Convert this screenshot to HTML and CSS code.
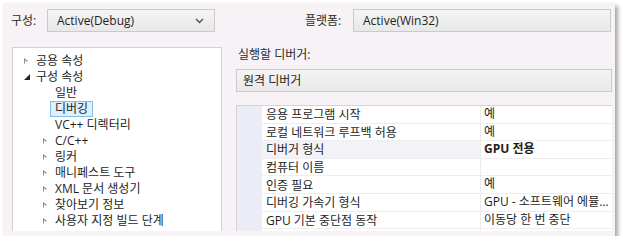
FILE: index.html
```html
<!DOCTYPE html>
<html lang="ko">
<head>
    <meta charset="UTF-8">
    <title>디버깅 속성</title>
    <link rel="stylesheet" href="styles.css">
</head>
<body>
    <div class="frame">
        <div class="toolbar">
            <span class="label">구성:</span>
            <div class="combo">
                <span>Active(Debug)</span>
                <svg class="chev" width="9" height="6" viewBox="0 0 9 6"><path d="M1 1 L4.5 4.5 L8 1" fill="none" stroke="#4a4a4a" stroke-width="1.3"/></svg>
            </div>
            <span></span>
            <span class="label">플랫폼:</span>
            <div class="combo">
                <span>Active(Win32)</span>
            </div>
        </div>

        <div class="main">
            <!-- 왼쪽 트리 -->
            <ul class="tree">
                <li class="node lv1"><i class="arrow closed"></i><span class="txt">공용 속성</span></li>
                <li class="node lv1"><i class="arrow open"></i><span class="txt">구성 속성</span></li>
                <li class="node lv2"><i class="arrow"></i><span class="txt">일반</span></li>
                <li class="node lv2"><i class="arrow"></i><span class="txt selected">디버깅</span></li>
                <li class="node lv2"><i class="arrow"></i><span class="txt">VC++ 디렉터리</span></li>
                <li class="node lv2"><i class="arrow closed"></i><span class="txt">C/C++</span></li>
                <li class="node lv2"><i class="arrow closed"></i><span class="txt">링커</span></li>
                <li class="node lv2"><i class="arrow closed"></i><span class="txt">매니페스트 도구</span></li>
                <li class="node lv2"><i class="arrow closed"></i><span class="txt">XML 문서 생성기</span></li>
                <li class="node lv2"><i class="arrow closed"></i><span class="txt">찾아보기 정보</span></li>
                <li class="node lv2"><i class="arrow closed"></i><span class="txt">사용자 지정 빌드 단계</span></li>
            </ul>

            <!-- 오른쪽 디버거 설정 -->
            <div class="side">
                <div class="side-label">실행할 디버거:</div>
                <div class="combo wide"><span>원격 디버거</span></div>
                <div class="props">
                    <div class="prop"><span class="gutter"></span><span class="name">응용 프로그램 시작</span><span class="value">예</span></div>
                    <div class="prop"><span class="gutter"></span><span class="name">로컬 네트워크 루프백 허용</span><span class="value">예</span></div>
                    <div class="prop current"><span class="gutter"></span><span class="name">디버거 형식</span><span class="value strong">GPU 전용</span></div>
                    <div class="prop"><span class="gutter"></span><span class="name">컴퓨터 이름</span><span class="value"></span></div>
                    <div class="prop"><span class="gutter"></span><span class="name">인증 필요</span><span class="value">예</span></div>
                    <div class="prop"><span class="gutter"></span><span class="name">디버깅 가속기 형식</span><span class="value">GPU - 소프트웨어 에뮬레이터</span></div>
                    <div class="prop"><span class="gutter"></span><span class="name">GPU 기본 중단점 동작</span><span class="value">이동당 한 번 중단</span></div>
                    <div class="prop"><span class="gutter"></span><span class="name"></span><span class="value"></span></div>
                </div>
            </div>
        </div>
    </div>
</body>
</html>
```

FILE: styles.css
```css
:root {
    --panel: #f6f2f6;
    --text: #1e1e1e;
    --line: #cdc8cd;
    --gutter: #ececf6;
}

* {
    box-sizing: border-box;
    margin: 0;
    padding: 0;
}

body {
    background: #ffffff;
    padding: 3px 0 0 3px;
    font-family: 'Open Sans', 'Noto Sans CJK KR', sans-serif;
    font-size: 12px;
    color: var(--text);
}

.frame {
    width: 612px;
    height: 233px;
    background: var(--panel);
    padding: 6px 3px 5px 8px;
    box-shadow: 3px 3px 4px rgba(0, 0, 0, 0.35);
}

.toolbar {
    display: grid;
    grid-template-columns: 36px 168px 90px 48px 258px;
    height: 23px;
    align-items: center;
}

.label {
    color: #2b2b2b;
    line-height: 16px;
}

.combo {
    height: 23px;
    display: flex;
    align-items: center;
    justify-content: space-between;
    padding: 0 10px 0 9px;
    border: 1px solid var(--line);
    background: linear-gradient(#f5f4f5, #e9e8e9);
    line-height: 16px;
}

.chev {
    display: block;
    margin-top: 1px;
}

.main {
    display: grid;
    grid-template-columns: 210px 376px;
    column-gap: 14px;
    margin: 15px 0 0 1px;
    height: 184px;
}

/* 트리 */
.tree {
    list-style: none;
    background: #ffffff;
    border: 1px solid #d3cfd3;
    border-bottom: none;
    padding-top: 5px;
}

.node {
    display: flex;
    align-items: center;
    height: 16px;
}

.node.lv1 {
    padding-left: 10px;
}

.node.lv1 .arrow {
    width: 8px;
}

.node.lv2 {
    padding-left: 29px;
}

.node.lv2 .arrow {
    width: 8px;
}

.arrow {
    display: block;
    height: 16px;
    position: relative;
}

.arrow.closed::before {
    content: "";
    position: absolute;
    left: 1px;
    top: 5px;
    border-style: solid;
    border-width: 3.5px 0 3.5px 4px;
    border-color: transparent transparent transparent #8c8c8c;
}

.arrow.closed::after {
    content: "";
    position: absolute;
    left: 2px;
    top: 6.5px;
    border-style: solid;
    border-width: 2px 0 2px 2px;
    border-color: transparent transparent transparent #ffffff;
}

.arrow.open::before {
    content: "";
    position: absolute;
    left: 1px;
    top: 5px;
    border-style: solid;
    border-width: 0 0 6px 6px;
    border-color: transparent transparent #262626 transparent;
}

.txt {
    display: block;
    line-height: 14px;
    padding: 0 4px;
    border: 1px solid transparent;
    white-space: nowrap;
}

.txt.selected {
    background: #dfeffb;
    border-color: #85bde9;
}

/* 오른쪽 */
.side {
    display: flex;
    flex-direction: column;
}

.side-label {
    line-height: 16px;
    color: #2b2b2b;
    padding-left: 2px;
}

.combo.wide {
    margin-top: 6px;
    padding-left: 6px;
}

.props {
    margin-top: 13px;
    height: 126px;
    background: #ffffff;
    border: 1px solid #d6d2d6;
    border-right: none;
    border-bottom: none;
    overflow: hidden;
}

.prop {
    display: grid;
    grid-template-columns: 25px 219px 1fr;
    height: 17.6px;
}

.gutter {
    background: var(--gutter);
}

.name,
.value {
    display: flex;
    align-items: center;
    border-bottom: 1px solid #eeeeee;
    white-space: nowrap;
    overflow: hidden;
}

.name {
    padding-left: 4px;
    border-right: 1px solid #ebebeb;
}

.value {
    padding-left: 3px;
    display: block;
    line-height: 16px;
    text-overflow: ellipsis;
}

.prop.current .name {
    background: #f3f2f8;
}

.value.strong {
    font-weight: 700;
}
```
